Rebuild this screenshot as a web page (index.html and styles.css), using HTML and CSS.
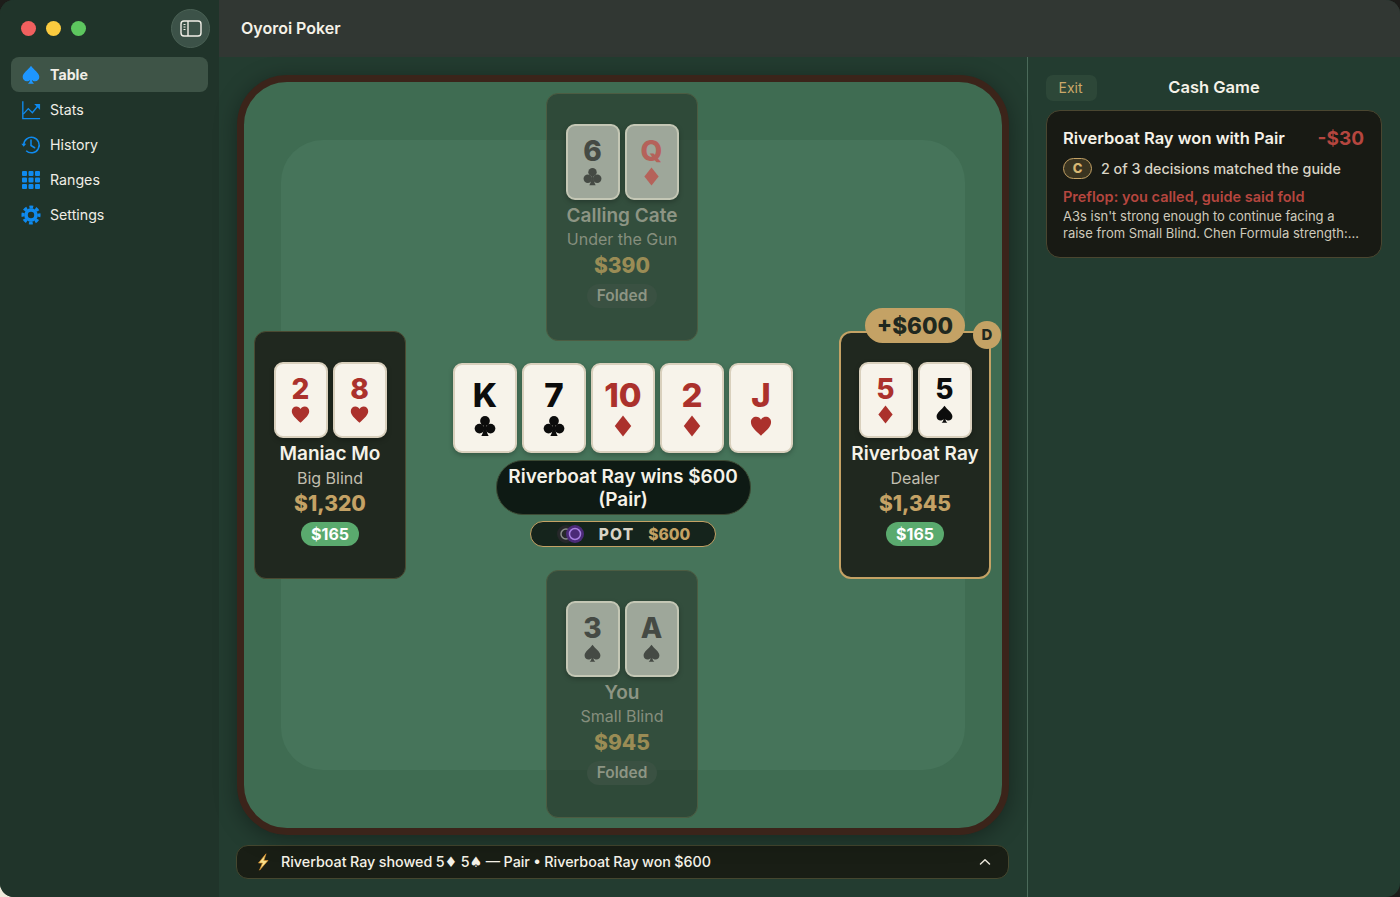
FILE: index.html
```html
<!DOCTYPE html>
<html lang="en">
<head>
    <meta charset="UTF-8">
    <meta name="viewport" content="width=device-width, initial-scale=1.0">
    <title>Oyoroi Poker</title>
    <link rel="stylesheet" href="styles.css">
</head>
<body>
    <svg class="defs" width="0" height="0">
        <symbol id="heart" viewBox="0 0 24 24"><path d="M12 22.5C5 16 1 12.400 1 7.600 1 4 3.700 1.800 6.800 1.800c2.300 0 4.200 1.200 5.200 3.300 1-2.100 2.900-3.300 5.200-3.300C20.300 1.800 23 4 23 7.600c0 4.800-4 8.400-11 14.900z"/></symbol>
        <symbol id="diamond" viewBox="0 0 24 24"><path d="M12 .5 21 12 12 23.500 3 12z"/></symbol>
        <symbol id="spade" viewBox="0 0 24 24"><path d="M12 .8C9 5.500 2 9.300 2 14.500c0 3 2.400 5.100 5 5.100 1.700 0 3-.7 3.900-1.900-.2 2-1 3.400-2.500 4.700h7.200c-1.500-1.300-2.300-2.700-2.500-4.700.9 1.200 2.200 1.900 3.900 1.900 2.600 0 5-2.100 5-5.100C22 9.300 15 5.500 12 .8z"/></symbol>
        <symbol id="club" viewBox="0 0 24 24"><circle cx="12" cy="6.500" r="5.300"/><circle cx="6" cy="14.800" r="5.300"/><circle cx="18" cy="14.800" r="5.300"/><path d="M10.800 9h2.400c0 6 .6 10.500 2.800 14H8c2.200-3.500 2.800-8 2.800-14z"/></symbol>
    </svg>

    <div class="app">
        <aside class="sidebar">
            <div class="sidebar-top">
                <div class="lights">
                    <span class="light red-light"></span>
                    <span class="light yellow-light"></span>
                    <span class="light green-light"></span>
                </div>
                <button class="toggle">
                    <svg width="22" height="17" viewBox="0 0 22 17" fill="none" stroke="#f2f0e8" stroke-width="1.400">
                        <rect x="1" y="1" width="20" height="15" rx="3"/>
                        <path d="M8 1v15"/>
                        <path d="M3.500 4.500h2M3.500 7h2M3.500 9.500h2" stroke-width="1"/>
                    </svg>
                </button>
            </div>
            <nav class="nav">
                <a class="nav-item active">
                    <svg class="nav-icon" viewBox="0 0 24 24" fill="#1e96ff"><use href="#spade"/></svg>
                    Table
                </a>
                <a class="nav-item">
                    <svg class="nav-icon" viewBox="0 0 22 22" fill="none" stroke="#0f8aee" stroke-width="1.500">
                        <path d="M2 1.500V20.500H21"/>
                        <path d="M2.500 15.500 8 9.500l4.500 4.500 6.500-8"/>
                        <path d="M14.500 4.500h6.500v6.500z" fill="#0f8aee" stroke="none"/>
                    </svg>
                    Stats
                </a>
                <a class="nav-item">
                    <svg class="nav-icon" viewBox="0 0 22 22" fill="none" stroke="#0f8aee" stroke-width="1.700">
                        <path d="M3 11a8.500 8.500 0 1 1 2.700 6.300"/>
                        <path d="M.3 9.500h5.400L3 13z" fill="#0f8aee" stroke="none"/>
                        <path d="M11 5.500V11.500l4 2.500" stroke-linecap="round"/>
                    </svg>
                    History
                </a>
                <a class="nav-item">
                    <svg class="nav-icon" viewBox="0 0 20 20" fill="#0f8aee">
                        <rect x="1" y="1" width="5" height="5" rx="1"/><rect x="7.500" y="1" width="5" height="5" rx="1"/><rect x="14" y="1" width="5" height="5" rx="1"/>
                        <rect x="1" y="7.500" width="5" height="5" rx="1"/><rect x="7.500" y="7.500" width="5" height="5" rx="1"/><rect x="14" y="7.500" width="5" height="5" rx="1"/>
                        <rect x="1" y="14" width="5" height="5" rx="1"/><rect x="7.500" y="14" width="5" height="5" rx="1"/><rect x="14" y="14" width="5" height="5" rx="1"/>
                    </svg>
                    Ranges
                </a>
                <a class="nav-item">
                    <svg class="nav-icon" viewBox="0 0 22 22" fill="none" stroke="#0f8aee">
                        <circle cx="11" cy="11" r="5.500" stroke-width="4"/>
                        <circle cx="11" cy="11" r="8.800" stroke-width="3.400" stroke-dasharray="4.100 2.810" stroke-dashoffset="2"/>
                    </svg>
                    Settings
                </a>
            </nav>
        </aside>

        <div class="main">
            <header class="topbar">Oyoroi Poker</header>
            <div class="content">
                <section class="game">
                    <div class="table">
                        <div class="felt-inner"></div>

                        <div class="seat seat-top folded">
                            <div class="hole-cards">
                                <div class="card"><span class="rank">6</span><svg class="suit"><use href="#club"/></svg></div>
                                <div class="card red"><span class="rank">Q</span><svg class="suit"><use href="#diamond"/></svg></div>
                            </div>
                            <div class="name">Calling Cate</div>
                            <div class="role">Under the Gun</div>
                            <div class="stack">$390</div>
                            <div class="status">Folded</div>
                        </div>

                        <div class="seat seat-left">
                            <div class="hole-cards">
                                <div class="card red"><span class="rank">2</span><svg class="suit"><use href="#heart"/></svg></div>
                                <div class="card red"><span class="rank">8</span><svg class="suit"><use href="#heart"/></svg></div>
                            </div>
                            <div class="name">Maniac Mo</div>
                            <div class="role">Big Blind</div>
                            <div class="stack">$1,320</div>
                            <div class="bet">$165</div>
                        </div>

                        <div class="seat seat-right winner">
                            <div class="win-badge">+$600</div>
                            <div class="dealer">D</div>
                            <div class="hole-cards">
                                <div class="card red"><span class="rank">5</span><svg class="suit"><use href="#diamond"/></svg></div>
                                <div class="card"><span class="rank">5</span><svg class="suit"><use href="#spade"/></svg></div>
                            </div>
                            <div class="name">Riverboat Ray</div>
                            <div class="role">Dealer</div>
                            <div class="stack">$1,345</div>
                            <div class="bet">$165</div>
                        </div>

                        <div class="seat seat-bottom folded">
                            <div class="hole-cards">
                                <div class="card"><span class="rank">3</span><svg class="suit"><use href="#spade"/></svg></div>
                                <div class="card"><span class="rank">A</span><svg class="suit"><use href="#spade"/></svg></div>
                            </div>
                            <div class="name">You</div>
                            <div class="role">Small Blind</div>
                            <div class="stack">$945</div>
                            <div class="status">Folded</div>
                        </div>

                        <div class="center">
                            <div class="board">
                                <div class="card big"><span class="rank">K</span><svg class="suit"><use href="#club"/></svg></div>
                                <div class="card big"><span class="rank">7</span><svg class="suit"><use href="#club"/></svg></div>
                                <div class="card big red"><span class="rank">10</span><svg class="suit"><use href="#diamond"/></svg></div>
                                <div class="card big red"><span class="rank">2</span><svg class="suit"><use href="#diamond"/></svg></div>
                                <div class="card big red"><span class="rank">J</span><svg class="suit"><use href="#heart"/></svg></div>
                            </div>
                            <div class="result">Riverboat Ray wins $600<br>(Pair)</div>
                            <div class="pot">
                                <svg class="chips" width="30" height="20" viewBox="0 0 30 20" fill="none">
                                    <circle cx="10" cy="10" r="9" fill="#26282a"/>
                                    <circle cx="10" cy="10" r="5" stroke="#8b8d8c" stroke-width="1.500"/>
                                    <circle cx="19" cy="10" r="9" fill="#4b2a78"/>
                                    <circle cx="19" cy="10" r="5.500" stroke="#a77fe0" stroke-width="1.500"/>
                                </svg>
                                <span class="pot-label">POT</span>
                                <span class="pot-value">$600</span>
                            </div>
                        </div>
                    </div>

                    <div class="log">
                        <svg class="bolt" width="14" height="18" viewBox="0 0 14 18"><path d="M10 .8 2.500 10h4L3.500 17.200 12 7.500H7.800z" fill="#f8e08c" stroke="#d98f2b" stroke-width=".7" stroke-linejoin="round"/></svg>
                        <span class="log-text">Riverboat Ray showed 5<span class="log-suit">♦</span> 5<span class="log-suit">♠</span> — Pair • Riverboat Ray won $600</span>
                        <svg class="chevron" width="12" height="8" viewBox="0 0 12 8" fill="none" stroke="#e8e4d8" stroke-width="1.500" stroke-linecap="round" stroke-linejoin="round"><path d="M1.500 6 6 1.700 10.500 6"/></svg>
                    </div>
                </section>

                <aside class="panel">
                    <div class="panel-head">
                        <button class="exit">Exit</button>
                        <h2>Cash Game</h2>
                    </div>
                    <div class="review">
                        <div class="review-title">
                            <span>Riverboat Ray won with Pair</span>
                            <span class="loss">-$30</span>
                        </div>
                        <div class="grade-row">
                            <span class="grade">C</span>
                            <span>2 of 3 decisions matched the guide</span>
                        </div>
                        <div class="mistake">Preflop: you called, guide said fold</div>
                        <p class="explain">A3s isn't strong enough to continue facing a raise from Small Blind. Chen Formula strength:...</p>
                    </div>
                </aside>
            </div>
        </div>
    </div>
</body>
</html>
```

FILE: styles.css
```css
* {
    box-sizing: border-box;
}
html, body {
    margin: 0;
    height: 100%;
    overflow: hidden;
}
body {
    position: relative;
    font-family: Inter, "Liberation Sans", sans-serif;
    background: #1d1d1a;
    color: #f5f2e8;
}
/* the desktop shows through the window's bottom left corner */
body::before {
    content: "";
    position: absolute;
    left: 0;
    bottom: 0;
    width: 16px;
    height: 16px;
    background: #efeadc;
}
.defs {
    position: absolute;
}
.app {
    position: relative;
    display: flex;
    height: 897px;
    border-radius: 14px;
    overflow: hidden;
    background: #233c30;
}

/* sidebar */
.sidebar {
    width: 219px;
    flex-shrink: 0;
    background: #20342a;
    padding: 0 11px;
}
.sidebar-top {
    height: 57px;
    display: flex;
    align-items: center;
    justify-content: space-between;
    padding-left: 10px;
}
.lights {
    display: flex;
    gap: 10px;
}
.light {
    width: 15px;
    height: 15px;
    border-radius: 50%;
}
.red-light { background: #f1605f; }
.yellow-light { background: #fbcb3f; }
.green-light { background: #5dc65f; }
.toggle {
    width: 39px;
    height: 39px;
    margin-right: -2px;
    border-radius: 50%;
    border: 1px solid #4b6256;
    background: #3c5248;
    display: flex;
    align-items: center;
    justify-content: center;
    padding: 0;
}
.nav {
    display: flex;
    flex-direction: column;
}
.nav-item {
    height: 35px;
    display: flex;
    align-items: center;
    gap: 9px;
    padding-left: 10px;
    border-radius: 8px;
    font-size: 14.200px;
    color: #f0eee6;
}
.nav-item.active {
    background: #3e5447;
    font-weight: 700;
}
.nav-icon {
    width: 20px;
    height: 20px;
}

/* main */
.main {
    flex: 1;
    display: flex;
    flex-direction: column;
    min-width: 0;
}
.topbar {
    height: 57px;
    background: #313733;
    display: flex;
    align-items: center;
    padding: 0 0 2px 22px;
    font-size: 16px;
    font-weight: 600;
}
.content {
    flex: 1;
    display: flex;
    min-height: 0;
}
.game {
    width: 808px;
    padding: 18px;
    display: flex;
    flex-direction: column;
    gap: 10px;
}
.table {
    position: relative;
    flex: 1;
    border: 7px solid #3b241a;
    border-radius: 50px;
    background: #3f6c52;
    box-shadow: 0 4px 22px rgba(0, 0, 0, 0.35);
    display: flex;
    align-items: center;
    justify-content: center;
}
.felt-inner {
    position: absolute;
    left: 37px;
    right: 37px;
    top: 58px;
    bottom: 58px;
    border-radius: 42px;
    background: #46745a;
}

/* seats */
.seat {
    position: absolute;
    width: 152px;
    height: 248px;
    padding-top: 30px;
    background: #20281f;
    border: 1px solid #4a4a32;
    border-radius: 12px;
    display: flex;
    flex-direction: column;
    align-items: center;
}
.seat-top { left: 302px; top: 11px; }
.seat-bottom { left: 302px; top: 488px; }
.seat-left { left: 10px; top: 249px; }
.seat-right { left: 595px; top: 249px; }
.winner {
    border: 2px solid #c4a265;
    padding-top: 29px;
}
.hole-cards {
    display: flex;
    gap: 5px;
}
.card {
    width: 54px;
    height: 76px;
    background: #f7f3ea;
    border: 2px solid #d9d0bd;
    border-radius: 9px;
    box-shadow: 0 2px 5px rgba(0, 0, 0, 0.25);
    display: flex;
    flex-direction: column;
    align-items: center;
    justify-content: center;
    color: #0c0c0c;
    fill: #0c0c0c;
}
.card.red {
    color: #ab312c;
    fill: #ab312c;
}
.rank {
    font-size: 28px;
    line-height: 27px;
    font-weight: 800;
}
.suit {
    width: 19px;
    height: 19px;
    margin-top: 2px;
}
.card.big {
    width: 64px;
    height: 90px;
}
.card.big .rank {
    font-size: 33px;
    line-height: 32px;
}
.card.big .suit {
    width: 22px;
    height: 22px;
    margin-top: 4px;
}
.name {
    margin-top: 3px;
    font-size: 19px;
    line-height: 25px;
    font-weight: 600;
    white-space: nowrap;
}
.role {
    font-size: 16px;
    line-height: 25px;
    color: #c2bfb0;
}
.stack {
    font-size: 21px;
    line-height: 26px;
    font-weight: 800;
    color: #c4a265;
}
.bet {
    margin-top: 5px;
    height: 24px;
    padding: 0 10px;
    border-radius: 12px;
    background: #5aaa6e;
    color: #fff;
    font-size: 16px;
    line-height: 24px;
    font-weight: 700;
}
.status {
    margin-top: 5px;
    height: 24px;
    padding: 0 10px;
    border-radius: 12px;
    background: #3a5142;
    color: #8d9584;
    font-size: 15.500px;
    line-height: 24px;
    font-weight: 600;
}

/* folded seats fade into the felt */
.folded {
    background: rgba(32, 40, 31, 0.5);
    border-color: #4c5c42;
}
.folded .card {
    background: #9ea79a;
    border-color: #c4c7b5;
    color: #454a44;
    fill: #454a44;
}
.folded .card.red {
    color: #b5625a;
    fill: #b5625a;
}
.folded .name {
    color: #8d9584;
}
.folded .role {
    line-height: 23px;
    margin-bottom: 2px;
    color: #868e7d;
}
.folded .stack {
    color: #9a8c55;
}

.win-badge {
    position: absolute;
    left: 24px;
    top: -25px;
    width: 100px;
    height: 35px;
    border-radius: 18px;
    background: #c4a265;
    color: #20281f;
    font-size: 22.500px;
    line-height: 35px;
    font-weight: 800;
    text-align: center;
}
.dealer {
    position: absolute;
    right: -12px;
    top: -12px;
    width: 28px;
    height: 28px;
    border-radius: 50%;
    background: #c4a265;
    color: #20281f;
    font-size: 15px;
    line-height: 28px;
    font-weight: 800;
    text-align: center;
}

/* center of the table */
.center {
    position: relative;
    display: flex;
    flex-direction: column;
    align-items: center;
}
.board {
    display: flex;
    gap: 5px;
}
.result {
    margin-top: 7px;
    width: 255px;
    height: 55px;
    padding-top: 4px;
    border-radius: 27px;
    border: 1px solid #3c4a34;
    background: #0e1a14;
    font-size: 19px;
    line-height: 23px;
    font-weight: 600;
    text-align: center;
}
.pot {
    margin-top: 6px;
    width: 186px;
    height: 26px;
    border-radius: 13px;
    border: 1px solid #c4a265;
    background: #15241c;
    display: flex;
    align-items: center;
    justify-content: center;
    font-size: 15.500px;
    font-weight: 800;
}
.chips {
    margin-right: 13px;
}
.pot-label {
    margin-right: 14px;
    color: #d9d4c5;
    letter-spacing: 1.200px;
}
.pot-value {
    color: #c4a265;
}

/* action log */
.log {
    height: 34px;
    flex-shrink: 0;
    margin-left: -1px;
    border: 1px solid #45472f;
    border-radius: 12px;
    background: #191e15;
    display: flex;
    align-items: center;
    padding: 0 17px 1px 19px;
    font-size: 14.300px;
    font-weight: 500;
}
.log-text {
    flex: 1;
    margin-left: 11px;
    word-spacing: -0.400px;
}
.log-suit {
    font-family: "DejaVu Sans", sans-serif;
}

/* right panel */
.panel {
    flex: 1;
    border-left: 1px solid #4b6a5a;
    padding: 18px 18px 0;
}
.panel-head {
    position: relative;
    height: 26px;
    display: flex;
    align-items: center;
    justify-content: center;
}
.panel-head h2 {
    margin: 0 0 2px;
    font-size: 16.500px;
    font-weight: 600;
}
.exit {
    position: absolute;
    left: 0;
    top: 0;
    width: 51px;
    height: 26px;
    padding: 0 2px 2px 0;
    border: none;
    border-radius: 7px;
    background: #2d4738;
    color: #cba868;
    font-family: inherit;
    font-size: 14px;
}
.review {
    margin-top: 9px;
    height: 148px;
    padding: 16px 17px 16px 16px;
    background: #181a14;
    border: 1px solid #4a4630;
    border-radius: 14px;
}
.review-title {
    display: flex;
    justify-content: space-between;
    align-items: center;
    height: 22px;
    font-size: 16.500px;
    font-weight: 600;
}
.loss {
    color: #b5463f;
    font-size: 19px;
    font-weight: 700;
}
.grade-row {
    margin-top: 9px;
    display: flex;
    align-items: center;
    gap: 9px;
    font-size: 14.300px;
    font-weight: 500;
    color: #d9d4c5;
}
.grade {
    width: 29px;
    height: 21px;
    border-radius: 11px;
    border: 1px solid #c4a265;
    background: #3a3420;
    color: #d9b873;
    font-size: 13px;
    line-height: 19px;
    font-weight: 800;
    text-align: center;
}
.mistake {
    margin-top: 9px;
    font-size: 14.500px;
    line-height: 18px;
    font-weight: 600;
    color: #b5463f;
}
.explain {
    margin: 2px 0 0;
    font-size: 13px;
    line-height: 17px;
    color: #cfcabc;
}
```
